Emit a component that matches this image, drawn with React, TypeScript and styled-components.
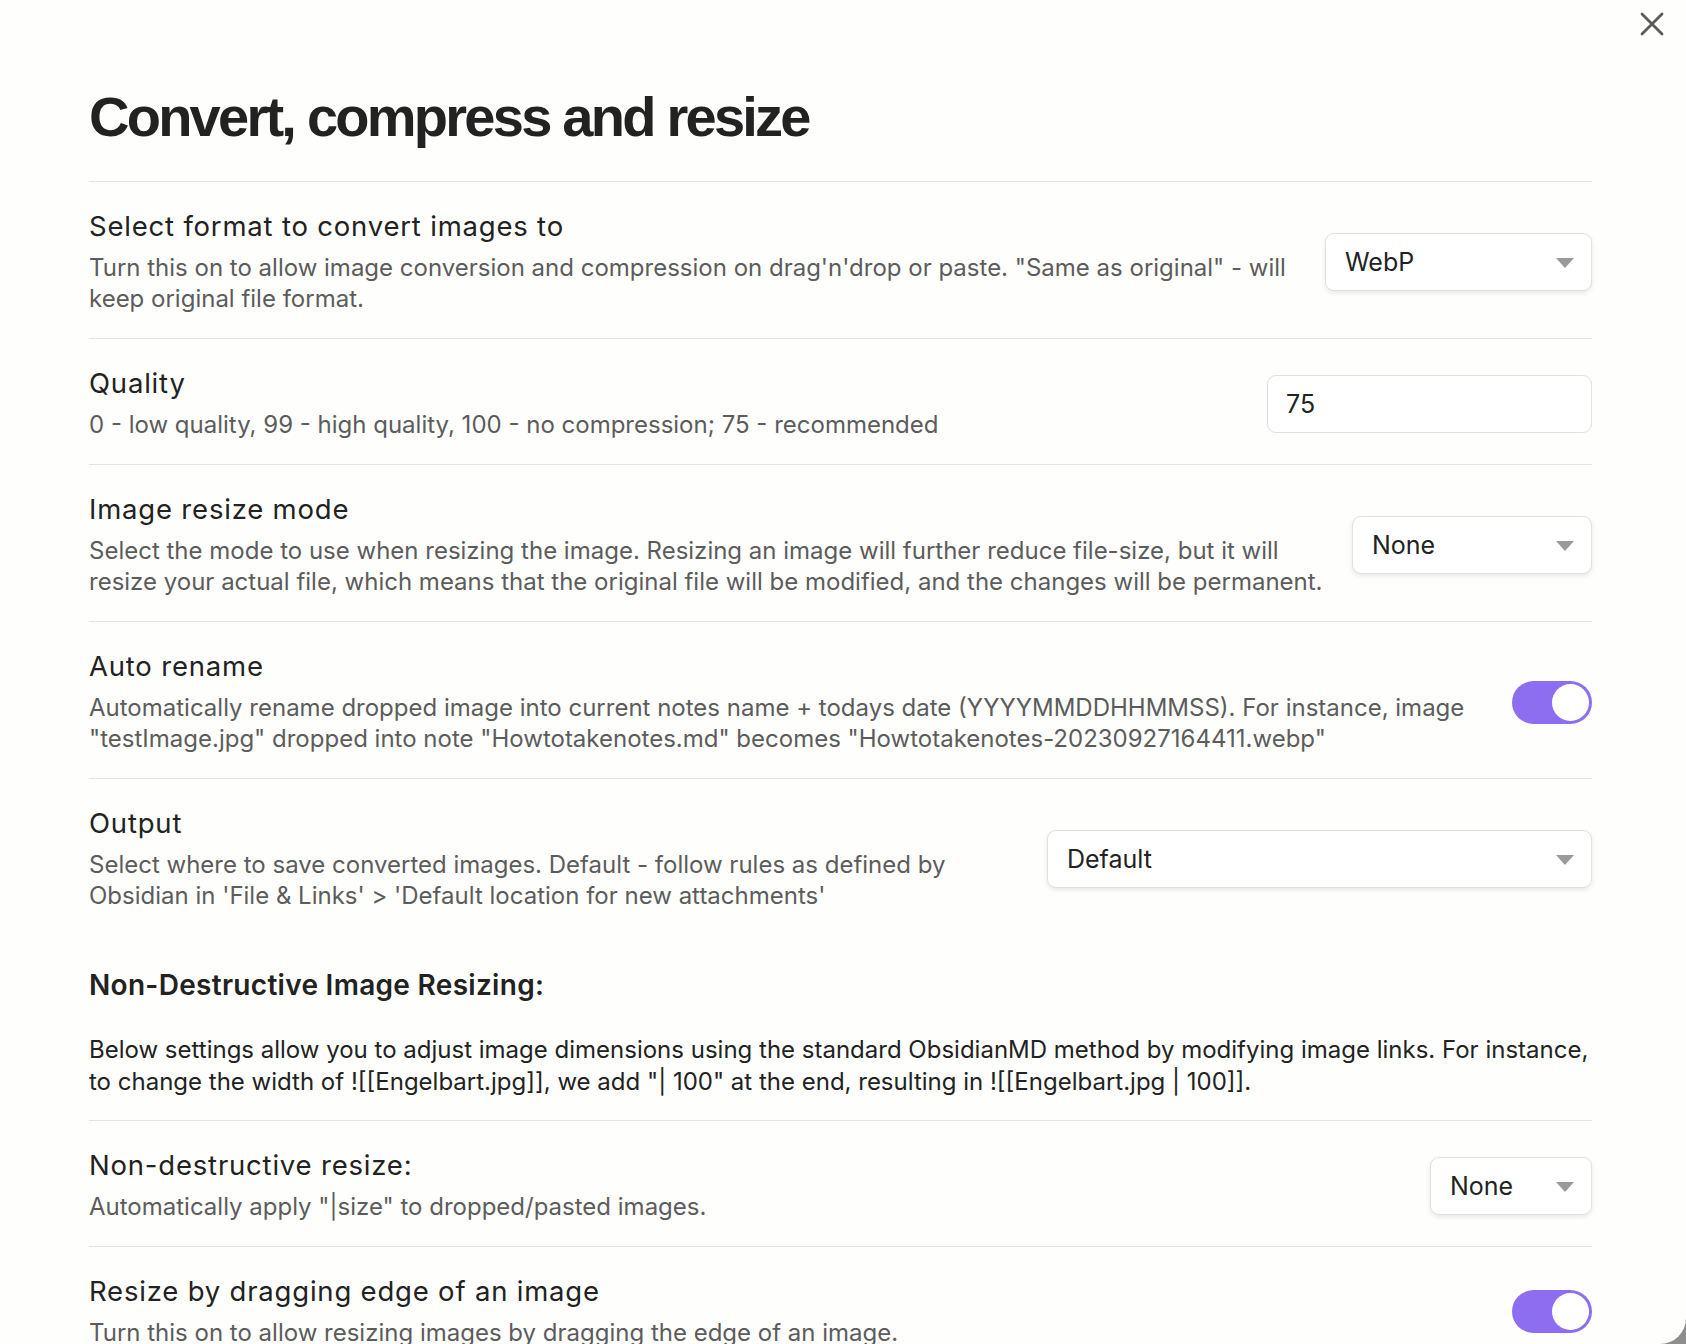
import React from "react";
import styled, { createGlobalStyle } from "styled-components";

const Global = createGlobalStyle`
  html, body { margin: 0; padding: 0; background: #8e8e8e; }
  body { font-family: "Inter", "Noto Sans", sans-serif; }
  * { box-sizing: border-box; }
`;

const Modal = styled.div`
  position: relative;
  width: 1686px;
  height: 1344px;
  background: #fefefd;
  border-bottom-right-radius: 26px;
  padding: 0 94px 40px 89px;
  overflow: hidden;
`;

const CloseButton = styled.button`
  position: absolute;
  top: 12px;
  right: 22px;
  width: 24px;
  height: 24px;
  padding: 0;
  border: 0;
  background: transparent;
  color: #5a5a5a;
  display: flex;
  align-items: center;
  justify-content: center;
`;

const Title = styled.h1`
  margin: 0;
  padding-top: 84px;
  padding-bottom: 31px;
  font-family: "Liberation Sans", Arial, sans-serif;
  font-weight: 700;
  font-size: 56px;
  line-height: 66px;
  letter-spacing: -2.75px;
  color: #222;
`;

const Item = styled.div<{ $border?: boolean }>`
  display: flex;
  align-items: center;
  border-top: ${(p) => (p.$border === false ? "none" : "1px solid #e3e3e3")};
  padding: 28px 0 24px;
`;

const Info = styled.div`
  flex: 1 1 auto;
  min-width: 0;
  margin-right: 24px;
`;

const Name = styled.div`
  font-size: 27.5px;
  line-height: 32px;
  letter-spacing: 0.8px;
  color: #222;
  font-weight: 400;
`;

const Desc = styled.div`
  margin-top: 10px;
  font-size: 24px;
  line-height: 31px;
  color: #5c5c5c;
`;

const Control = styled.div`
  flex: none;
  display: flex;
  justify-content: flex-end;
  align-items: center;
`;

const Select = styled.div<{ $w: number }>`
  width: ${(p) => p.$w}px;
  height: 58px;
  display: flex;
  align-items: center;
  justify-content: space-between;
  padding: 0 17px 0 19px;
  background: #fff;
  border: 1.5px solid #e0e0e0;
  border-radius: 9px;
  box-shadow: 0 2px 5px rgba(0, 0, 0, 0.09);
  font-size: 25px;
  color: #222;
`;

const Arrow = styled.span`
  width: 0;
  height: 0;
  border-left: 9px solid transparent;
  border-right: 9px solid transparent;
  border-top: 10px solid #9a9a9a;
  margin-top: 2px;
`;

const Input = styled.div<{ $w: number }>`
  width: ${(p) => p.$w}px;
  height: 58px;
  display: flex;
  align-items: center;
  padding: 0 18px;
  background: #fff;
  border: 1.5px solid #e0e0e0;
  border-radius: 9px;
  font-size: 25px;
  color: #222;
`;

const Toggle = styled.div<{ $on: boolean }>`
  position: relative;
  width: 80px;
  height: 43px;
  border-radius: 22px;
  background: ${(p) => (p.$on ? "#8e6ef0" : "#ccc")};
`;

const Knob = styled.span<{ $on: boolean }>`
  position: absolute;
  top: 3px;
  left: ${(p) => (p.$on ? "40px" : "3px")};
  width: 37px;
  height: 37px;
  border-radius: 50%;
  background: #fff;
`;

const Heading = styled.h3`
  margin: 33px 0 32px;
  font-size: 28px;
  line-height: 34px;
  letter-spacing: 0.3px;
  font-weight: 600;
  color: #222;
`;

const Paragraph = styled.p`
  margin: 0 0 23px;
  font-size: 24px;
  line-height: 31.5px;
  color: #222;
`;

const Dropdown = ({ value, width }: { value: string; width: number }) => (
  <Select $w={width}>
    <span>{value}</span>
    <Arrow />
  </Select>
);

const Switch = ({ on }: { on: boolean }) => (
  <Toggle $on={on}>
    <Knob $on={on} />
  </Toggle>
);

type Row = {
  name: string;
  desc: React.ReactNode;
  control: React.ReactNode;
};

const Setting = ({ name, desc, control, border }: Row & { border?: boolean }) => (
  <Item $border={border}>
    <Info>
      <Name>{name}</Name>
      <Desc>{desc}</Desc>
    </Info>
    <Control>{control}</Control>
  </Item>
);

export default function App() {
  return (
    <>
      <Global />
      <Modal>
        <CloseButton aria-label="Close">
          <svg width="24" height="24" viewBox="0 0 24 24" fill="none">
            <path d="M2 2 L22 22 M22 2 L2 22" stroke="currentColor" strokeWidth="2.8" strokeLinecap="round" />
          </svg>
        </CloseButton>
        <Title>Convert, compress and resize</Title>
        <Setting
          name="Select format to convert images to"
          desc={
            <>
              Turn this on to allow image conversion and compression on drag'n'drop or paste. "Same as original" - will
              keep original file format.
            </>
          }
          control={<Dropdown value="WebP" width={267} />}
        />
        <Setting
          name="Quality"
          desc="0 - low quality, 99 - high quality, 100 - no compression; 75 - recommended"
          control={<Input $w={325}>75</Input>}
        />
        <Setting
          name="Image resize mode"
          desc="Select the mode to use when resizing the image. Resizing an image will further reduce file-size, but it will resize your actual file, which means that the original file will be modified, and the changes will be permanent."
          control={<Dropdown value="None" width={240} />}
        />
        <Setting
          name="Auto rename"
          desc={
            'Automatically rename dropped image into current notes name + todays date (YYYYMMDDHHMMSS). For instance, image "testImage.jpg" dropped into note "Howtotakenotes.md" becomes "Howtotakenotes-20230927164411.webp"'
          }
          control={<Switch on />}
        />
        <Setting
          name="Output"
          desc="Select where to save converted images. Default - follow rules as defined by Obsidian in 'File & Links' > 'Default location for new attachments'"
          control={<Dropdown value="Default" width={545} />}
        />
        <Heading>Non-Destructive Image Resizing:</Heading>
        <Paragraph>
          Below settings allow you to adjust image dimensions using the standard ObsidianMD method by modifying image
          links. For instance, to change the width of ![[Engelbart.jpg]], we add "| 100" at the end, resulting in
          ![[Engelbart.jpg | 100]].
        </Paragraph>
        <Setting
          name="Non-destructive resize:"
          desc={'Automatically apply "|size" to dropped/pasted images.'}
          control={<Dropdown value="None" width={162} />}
        />
        <Setting
          name="Resize by dragging edge of an image"
          desc="Turn this on to allow resizing images by dragging the edge of an image."
          control={<Switch on />}
        />
      </Modal>
    </>
  );
}
